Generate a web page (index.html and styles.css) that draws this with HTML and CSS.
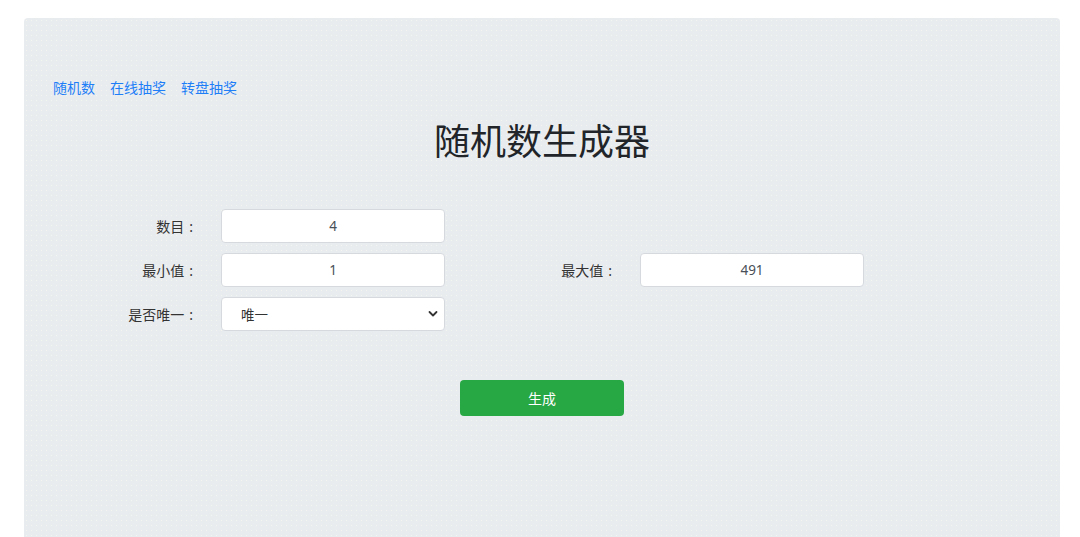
FILE: index.html
```html
<!DOCTYPE html>
<html lang="zh-CN">
<head>
<meta charset="utf-8">
<title>随机数生成器</title>
<link rel="stylesheet" href="styles.css">
</head>
<body>
<div class="card">
  <nav class="links">
    <a href="#">随机数</a>
    <a href="#">在线抽奖</a>
    <a href="#">转盘抽奖</a>
  </nav>
  <h1 class="title">随机数生成器</h1>
  <form class="form">
    <label class="lbl">数目<span class="colon">:</span></label>
    <input class="field" type="text" value="4">
    <span class="blank"></span>
    <span class="blank"></span>

    <label class="lbl">最小值<span class="colon">:</span></label>
    <input class="field" type="text" value="1">
    <label class="lbl">最大值<span class="colon">:</span></label>
    <input class="field" type="text" value="491">

    <label class="lbl">是否唯一<span class="colon">:</span></label>
    <div class="select-wrap">
      <select class="field sel">
        <option>唯一</option>
        <option>不唯一</option>
      </select>
      <svg class="caret" width="10" height="8" viewBox="0 0 10 8"><path d="M1.5 2 L5 5.5 L8.5 2" fill="none" stroke="#333" stroke-width="1.8" stroke-linecap="round" stroke-linejoin="round"/></svg>
    </div>
    <span class="blank"></span>
    <span class="blank"></span>
  </form>
  <div class="actions">
    <button class="btn" type="button">生成</button>
  </div>
</div>
</body>
</html>
```
FILE: styles.css
```css
html, body {
  margin: 0;
  padding: 0;
  background: #fff;
  font-family: "Noto Sans CJK SC", "Noto Sans", sans-serif;
  overflow: hidden;
}
.card {
  margin: 18px 0 0 24px;
  width: 1036px;
  height: 540px;
  box-sizing: border-box;
  background-color: #e9ecef;
  background-image: radial-gradient(rgba(255,255,240,0.55) 0.6px, transparent 0.9px);
  background-size: 5px 5px;
  border-radius: 4px 4px 0 0;
  padding: 58px 0 0 29px;
}
.links {
  display: flex;
  gap: 15px;
  font-size: 14px;
  line-height: 22px;
}
.links a {
  color: #1e7ef7;
  text-decoration: none;
}
.title {
  margin: 18px 0 0 -29px;
  text-align: center;
  font-size: 36px;
  font-weight: 400;
  line-height: 46px;
  color: #212529;
}
.form {
  margin: 47px 0 0 0;
  display: grid;
  grid-template-columns: 168px 224px 195px 224px;
  column-gap: 0;
  row-gap: 10px;
  align-items: center;
}
.lbl {
  font-size: 14px;
  color: #333;
  text-align: right;
  padding-right: 28px;
  white-space: nowrap;
}
.colon {
  font-family: "Noto Sans", sans-serif;
  margin-left: 5px;
}
.form > .field, .select-wrap {
  width: 224px;
}
.field {
  box-sizing: border-box;
  height: 34px;
  width: 224px;
  border: 1px solid #d6dadf;
  border-radius: 4px;
  background: #fff;
  font-family: "Noto Sans", "Noto Sans CJK SC", sans-serif;
  font-size: 13.5px;
  color: #495057;
  text-align: center;
  outline: none;
  margin: 0;
}
.select-wrap {
  position: relative;
  height: 34px;
}
.sel {
  appearance: none;
  -webkit-appearance: none;
  text-align: left;
  padding-left: 19px;
  font-family: "Noto Sans CJK SC", sans-serif;
  color: #333;
}
.caret {
  position: absolute;
  right: 7px;
  top: 13px;
  pointer-events: none;
}
.actions {
  display: flex;
  justify-content: center;
  margin: 49px 0 0 -29px;
}
.btn {
  width: 164px;
  height: 36px;
  background: #28a745;
  border: none;
  border-radius: 4px;
  color: #fff;
  font-family: "Noto Sans CJK SC", sans-serif;
  font-size: 14px;
}
```
